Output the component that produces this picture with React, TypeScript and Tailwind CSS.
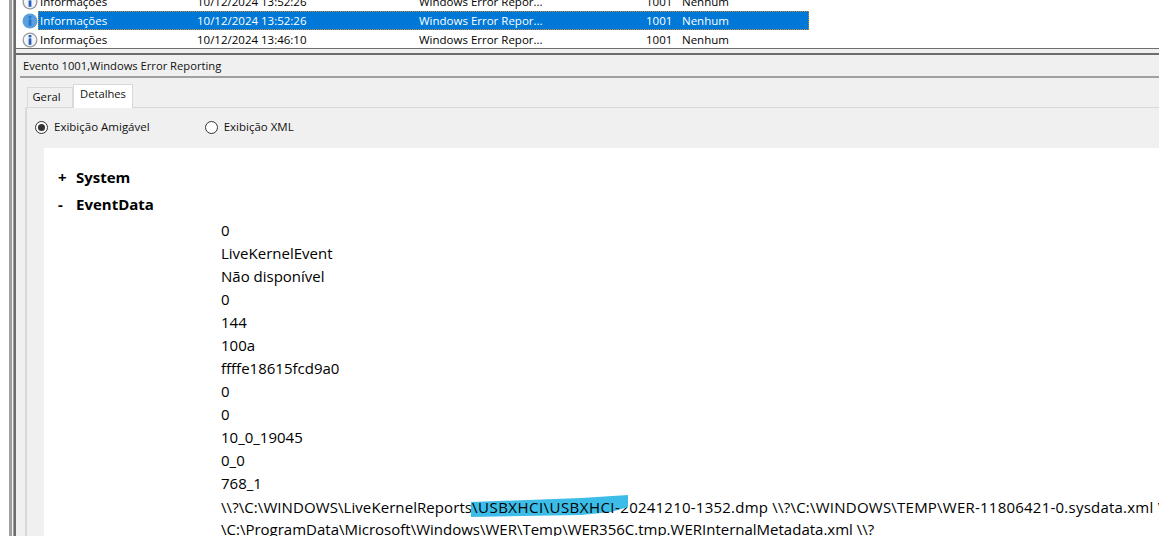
const sans = "font-['Open_Sans','Noto_Sans',sans-serif]";

const rows = [
  { time: "10/12/2024 13:52:26", selected: false },
  { time: "10/12/2024 13:52:26", selected: true },
  { time: "10/12/2024 13:46:10", selected: false },
];

const values = [
  "0",
  "LiveKernelEvent",
  "Não disponível",
  "0",
  "144",
  "100a",
  "ffffe18615fcd9a0",
  "0",
  "0",
  "10_0_19045",
  "0_0",
  "768_1",
];

function InfoIcon({ selected }: { selected: boolean }) {
  return (
    <svg width="16" height="16" viewBox="0 0 16 16" className="shrink-0">
      <circle cx="8" cy="8" r="7.5" fill={selected ? "#5c9fdc" : "#9a9a9a"} />
      <circle cx="8" cy="8" r="6.2" fill={selected ? "#5c9fdc" : "#f2f5fa"} />
      <rect x="6.6" y="3" width="2.8" height="2.4" rx="0.6" fill={selected ? "#1f78d0" : "#2a5db8"} />
      <rect x="6.6" y="6.4" width="2.8" height="6.4" fill={selected ? "#1f78d0" : "#2a5db8"} />
    </svg>
  );
}

function ListRow({ time, selected }: { time: string; selected: boolean }) {
  return (
    <div className="flex h-[19px] shrink-0 items-center pl-[6px] text-[11.5px] text-black">
      <InfoIcon selected={selected} />
      <div
        className={`flex h-[19px] w-[771px] items-center pl-[2px] ${
          selected ? "border border-dotted border-[#c98a3a] bg-[#0078d7] text-white" : ""
        }`}
      >
        <span className={`w-[157px] ${selected ? "ml-[-1px]" : ""}`}>Informações</span>
        <span className="w-[222px]">{time}</span>
        <span className="w-[227px]">Windows Error Repor...</span>
        <span className="w-[36px]">1001</span>
        <span>Nenhum</span>
      </div>
    </div>
  );
}

function Radio({ checked, label }: { checked: boolean; label: string }) {
  return (
    <div className="flex items-center gap-[6px]">
      <span className="flex size-[13px] items-center justify-center rounded-full border border-[#333] bg-white">
        {checked && <span className="size-[7px] rounded-full bg-[#333]" />}
      </span>
      <span>{label}</span>
    </div>
  );
}

export default function App() {
  return (
    <div className={`flex h-[536px] w-[1159px] overflow-hidden bg-[#f0f0f0] text-[#111] ${sans}`}>
      {/* window frame on the left */}
      <div className="flex w-[16px] shrink-0">
        <div className="w-[9px] bg-white" />
        <div className="w-[3px] bg-[#a0a0a0]" />
        <div className="w-[1px] bg-[#f0f0f0]" />
        <div className="w-[1px] bg-[#a0a0a0]" />
        <div className="w-[2px] bg-[#6d6d6d]" />
      </div>

      <div className="flex min-w-0 flex-1 flex-col overflow-hidden">
        <div className="flex h-[48px] shrink-0 flex-col overflow-hidden bg-white">
          <div className="-mt-[8px]">
            {rows.map((r, i) => (
              <ListRow key={i} time={r.time} selected={r.selected} />
            ))}
          </div>
        </div>
        <div className="h-[1px] shrink-0 bg-[#6d6d6d]" />
        <div className="h-[4px] shrink-0 bg-[#f0f0f0]" />
        <div className="h-[2px] shrink-0 bg-[#6d6d6d]" />

        <div className="flex h-[21px] shrink-0 items-center pl-[7px] pt-[2px] text-[11.2px]">
          Evento 1001,Windows Error Reporting
        </div>
        <div className="ml-[4px] h-[2px] shrink-0 bg-[#a0a0a0]" />

        {/* tabs */}
        <div className="ml-[11px] mt-[6px] flex h-[23px] shrink-0 items-end text-[11.2px]">
          <div className="flex h-[20px] w-[46px] items-center justify-center border border-b-0 border-[#d9d9d9] pr-[7px]">
            Geral
          </div>
          <div className="z-10 -mb-px flex h-[24px] w-[60px] justify-center border border-b-0 border-[#d9d9d9] bg-white pt-[1px]">
            Detalhes
          </div>
        </div>

        <div className="ml-[9px] flex min-h-0 flex-1 flex-col border-l-2 border-t border-[#d9d9d9] pl-[1px]">
          <div className="flex h-[40px] shrink-0 items-center gap-[55px] pb-[2px] pl-[7px] text-[11.5px]">
            <Radio checked label="Exibição Amigável" />
            <Radio checked={false} label="Exibição XML" />
          </div>
          <div className="ml-[16px] flex-1 bg-white pt-[18px] text-[15px] leading-[23px] text-black">
            <div className="mb-[4px] flex pl-[14px] font-bold">
              <span className="w-[18px]">+</span>
              <span>System</span>
            </div>
            <div className="flex pl-[14px] font-bold">
              <span className="w-[18px]">-</span>
              <span>EventData</span>
            </div>
            <div className="pl-[177px] pt-[3px]">
              {values.map((v, i) => (
                <div key={i} className="h-[23px]">
                  {v}
                </div>
              ))}
              <div className="mt-px whitespace-nowrap">
                <span className="tracking-[0.08px]">{"\\\\?\\C:\\WINDOWS\\LiveKernelReports"}</span>
                <span className="relative tracking-[0.47px]">
                  <svg width="160" height="26" viewBox="0 0 160 26" className="absolute left-[-1px] top-[-3px]">
                    <polygon points="0,8 110,4 157,1 157,13 140,18 110,21 0,23" fill="#3cbde8" />
                  </svg>
                  <span className="relative">{"\\USBXHCI\\USBXHCI-"}</span>
                </span>
                <span className="tracking-[0.23px]">
                  {"20241210-1352.dmp \\\\?\\C:\\WINDOWS\\TEMP\\WER-11806421-0.sysdata.xml \\\\?"}
                </span>
              </div>
              <div className="-mt-px whitespace-nowrap">
                {"\\C:\\ProgramData\\Microsoft\\Windows\\WER\\Temp\\WER356C.tmp.WERInternalMetadata.xml \\\\?"}
              </div>
            </div>
          </div>
        </div>
      </div>
    </div>
  );
}
